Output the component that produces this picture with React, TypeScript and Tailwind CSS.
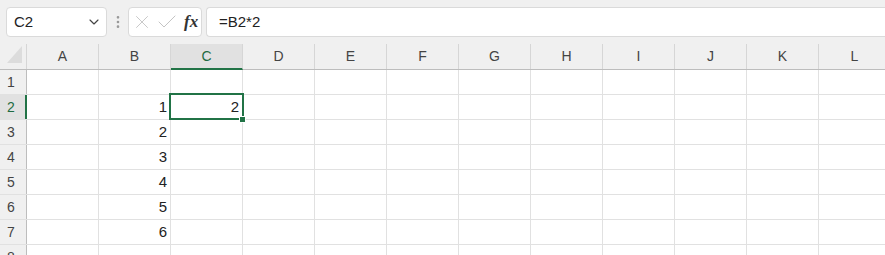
import React from "react"
import { ChevronDown, EllipsisVertical, X, Check } from "lucide-react"

const cols = ["A", "B", "C", "D", "E", "F", "G", "H", "I", "J", "K", "L"]
const rows = [1, 2, 3, 4, 5, 6, 7, 8]
const data: Record<string, string> = { B1: "1", B2: "2", B3: "3", B4: "4", B5: "5", B6: "6", C1: "2" }

function FormulaBar() {
  return (
    <div className="h-[44px] bg-[#f0f0f0] flex items-start pt-[7px] pl-[6px]">
      <div className="w-[101px] h-[30px] bg-white border border-[#dadada] rounded-[4px] flex items-center pl-[7px] pr-[4px] justify-between">
        <span className="text-[15px] text-[#222]">C2</span>
        <ChevronDown className="w-4 h-4 text-[#444]" strokeWidth={1.75} />
      </div>
      <div className="w-[21px] h-[30px] flex items-center justify-center">
        <EllipsisVertical className="w-4 h-4 text-[#999]" strokeWidth={2} />
      </div>
      <div className="w-[74px] h-[30px] bg-white border border-[#dadada] rounded-[4px] flex items-center pl-[2px] gap-[2px]">
        <X className="w-[22px] h-[22px] text-[#c4c4c4]" strokeWidth={1} />
        <Check className="w-[24px] h-[24px] text-[#c4c4c4]" strokeWidth={1} />
        <span className="font-['Liberation_Serif',serif] italic font-bold text-[17px] text-[#333] ml-[3px]">fx</span>
      </div>
      <div className="ml-[4px] flex-1 h-[30px] bg-white border border-[#dadada] border-r-0 rounded-l-[4px] flex items-center pl-[12px]">
        <span className="text-[15px] text-[#222]">=B2*2</span>
      </div>
    </div>
  )
}

function Header() {
  return (
    <div className="flex h-[26px] bg-[#f0f0f0] border-b border-[#bdbdbd]">
      <div className="w-[27px] shrink-0 border-r border-[#d6d6d6] relative">
        <div className="absolute left-[7px] top-[2px] w-0 h-0 border-l-[15px] border-l-transparent border-b-[17px] border-b-[#dcdcdc]" />
      </div>
      {cols.map((c) => (
        <div
          key={c}
          className={
            c === "C"
              ? "w-[72px] shrink-0 border-r border-[#d6d6d6] bg-[#e1e1e1] border-b-2 border-b-[#217346] -mb-px flex items-center justify-center text-[14px] text-[#1e6b41]"
              : "w-[72px] shrink-0 border-r border-[#d6d6d6] flex items-center justify-center text-[14px] text-[#444]"
          }
        >
          {c}
        </div>
      ))}
    </div>
  )
}

function Grid() {
  return (
    <div className="relative">
      {rows.map((r, i) => (
        <div key={r} className="flex h-[25px] border-b border-[#e1e1e1]">
          <div
            className={
              r === 2
                ? "w-[27px] shrink-0 bg-[#e1e1e1] border-r-2 border-r-[#217346] flex items-center pl-[7px] text-[14px] text-[#1e6b41]"
                : "w-[27px] shrink-0 bg-[#f0f0f0] border-r border-[#bdbdbd] flex items-center pl-[7px] text-[14px] text-[#444]"
            }
          >
            {r}
          </div>
          {cols.map((c) => (
            <div
              key={c}
              className="w-[72px] shrink-0 border-r border-[#e1e1e1] flex items-center justify-end pr-[3px] text-[15px] text-[#222]"
            >
              {data[c + i] ?? ""}
            </div>
          ))}
        </div>
      ))}
      <div className="absolute left-[169px] top-[23px] w-[75px] h-[27px] border-2 border-[#217346] pointer-events-none" />
      <div className="absolute left-[239px] top-[46px] w-[7px] h-[7px] bg-[#217346] border border-white" />
    </div>
  )
}

export default function App() {
  return (
    <div className="w-[885px] h-[255px] overflow-hidden bg-white font-['Liberation_Sans',Arial,sans-serif]">
      <FormulaBar />
      <Header />
      <Grid />
    </div>
  )
}
